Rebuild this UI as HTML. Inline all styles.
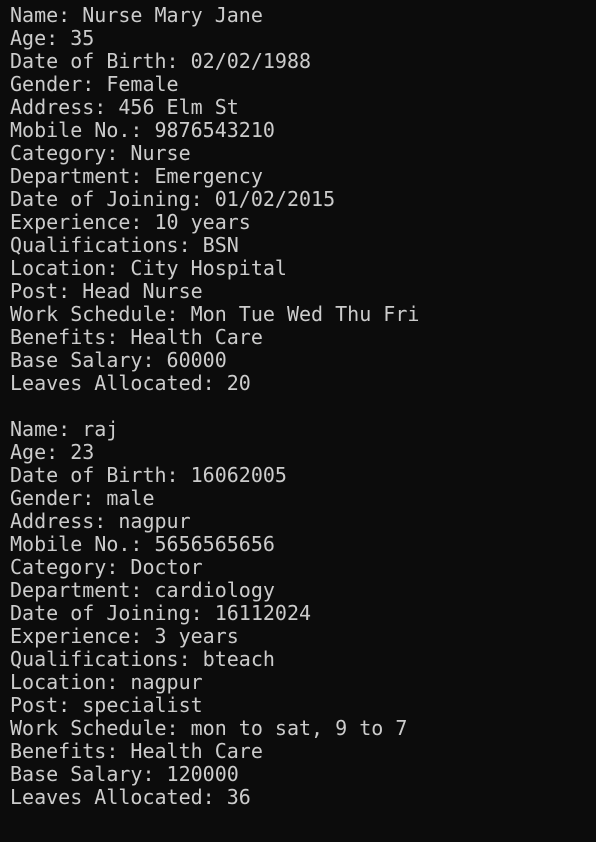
<!DOCTYPE html>
<html><head><meta charset="utf-8"><style>
html,body{margin:0;padding:0;background:#0c0c0c;width:596px;height:842px;overflow:hidden}
pre{margin:0;padding:4px 0 0 10px;font-family:"DejaVu Sans Mono","Liberation Mono",monospace;font-size:20px;line-height:23px;color:#cccccc}
</style></head><body><pre>Name: Nurse Mary Jane
Age: 35
Date of Birth: 02/02/1988
Gender: Female
Address: 456 Elm St
Mobile No.: 9876543210
Category: Nurse
Department: Emergency
Date of Joining: 01/02/2015
Experience: 10 years
Qualifications: BSN
Location: City Hospital
Post: Head Nurse
Work Schedule: Mon Tue Wed Thu Fri
Benefits: Health Care
Base Salary: 60000
Leaves Allocated: 20

Name: raj
Age: 23
Date of Birth: 16062005
Gender: male
Address: nagpur
Mobile No.: 5656565656
Category: Doctor
Department: cardiology
Date of Joining: 16112024
Experience: 3 years
Qualifications: bteach
Location: nagpur
Post: specialist
Work Schedule: mon to sat, 9 to 7
Benefits: Health Care
Base Salary: 120000
Leaves Allocated: 36</pre></body></html>
